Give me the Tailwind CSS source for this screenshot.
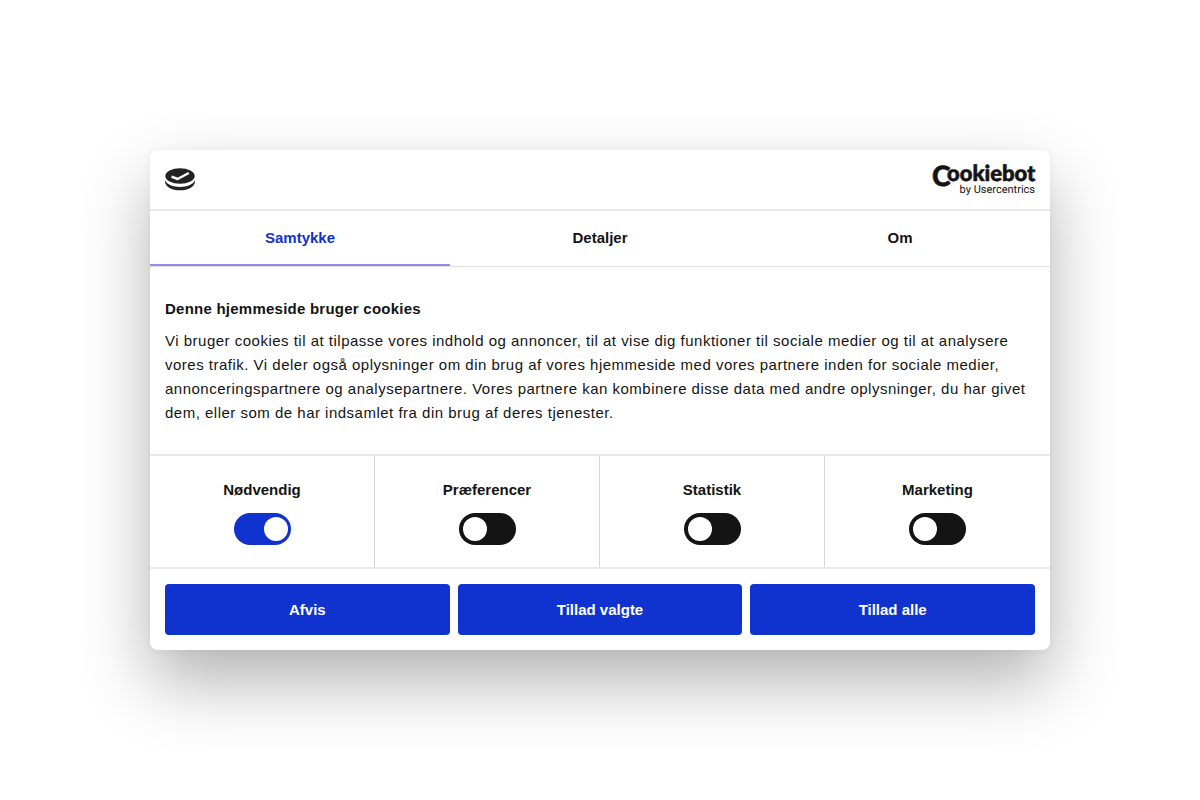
<!DOCTYPE html>
<html lang="da">

<head>
  <meta charset="UTF-8">
  <meta name="viewport" content="width=device-width, initial-scale=1.0">
  <script src="https://cdn.jsdelivr.net/npm/@tailwindcss/browser@4"></script>
  <title>Denne hjemmeside bruger cookies</title>
</head>

<body class="min-h-screen flex items-center justify-center bg-white text-[#141414] text-[15px] leading-6 font-['Liberation_Sans',Arial,sans-serif]">

  <div role="dialog" aria-labelledby="title" class="w-3/4 max-w-[900px] bg-white rounded-lg shadow-[0_32px_68px_rgba(0,0,0,0.3),0_0_8px_rgba(0,0,0,0.04)]">

    <!-- logos -->
    <header class="flex items-center justify-between h-[61px] px-[15px] border-b-2 border-[#e8e8e8]">
      <svg class="w-[30px] h-6" viewBox="0 0 30 24" role="img" aria-label="Logo">
        <ellipse cx="15" cy="8" rx="14.700" ry="7.800" fill="#222" />
        <path d="M0 12.200C2 16.600 8 18.900 15 18.900s13-2.300 15-6.700C30.600 18.500 24 22.300 15 22.300S-.6 18.500 0 12.200z" fill="#222" />
        <path d="M6.500 8.600L12.600 11L23.800 5" fill="none" stroke="#fff" stroke-width="2.500" stroke-linejoin="round" />
      </svg>
      <a href="#">
        <svg class="w-[103px] h-[31px] overflow-visible" viewBox="0 0 103 31" fill="#141414" text-rendering="geometricPrecision">
          <text x="0" y="22" font-family="Lato" font-weight="900" font-size="28" stroke="#141414" stroke-width="0.6">C<tspan x="15" y="17" font-size="22">ookiebot</tspan></text>
          <text x="103" y="29" text-anchor="end" font-family="Roboto" font-size="11">by Usercentrics</text>
        </svg>
      </a>
    </header>

    <nav class="grid grid-cols-3 h-14 border-b border-[#dedede] font-bold">
      <button class="border-b-2 border-[#8f92e2] text-[#1032cf] cursor-pointer">Samtykke</button>
      <button class="border-b-2 border-transparent cursor-pointer">Detaljer</button>
      <button class="border-b-2 border-transparent cursor-pointer">Om</button>
    </nav>

    <main class="px-[15px] pt-[30px] pb-[29px]">
      <h2 id="title" class="font-bold tracking-[0.016em] mb-2">Denne hjemmeside bruger cookies</h2>
      <p class="tracking-[0.033em]">Vi bruger cookies til at tilpasse vores indhold og annoncer, til at vise dig funktioner til sociale medier og til at analysere vores trafik. Vi deler også oplysninger om din brug af vores hjemmeside med vores partnere inden for sociale medier, annonceringspartnere og analysepartnere. Vores partnere kan kombinere disse data med andre oplysninger, du har givet dem, eller som de har indsamlet fra din brug af deres tjenester.</p>
    </main>

    <!-- categories -->
    <div class="grid grid-cols-4 border-y-2 border-[#e8e8e8] font-bold">
      <div class="flex flex-col items-center gap-[11px] py-[22px] border-r border-[#d6d6d6]">
        <label for="necessary">Nødvendig</label>
        <input id="necessary" type="checkbox" checked class="appearance-none w-[57px] h-8 p-1 checked:pr-[3px] rounded-full bg-[#141414] checked:bg-[#1032cf] before:block before:size-6 before:rounded-full before:bg-white checked:before:ml-auto">
      </div>
      <div class="flex flex-col items-center gap-[11px] py-[22px] border-r border-[#d6d6d6]">
        <label for="preferences">Præferencer</label>
        <input id="preferences" type="checkbox" class="appearance-none w-[57px] h-8 p-1 checked:pr-[3px] rounded-full bg-[#141414] checked:bg-[#1032cf] before:block before:size-6 before:rounded-full before:bg-white checked:before:ml-auto">
      </div>
      <div class="flex flex-col items-center gap-[11px] py-[22px] border-r border-[#d6d6d6]">
        <label for="statistics">Statistik</label>
        <input id="statistics" type="checkbox" class="appearance-none w-[57px] h-8 p-1 checked:pr-[3px] rounded-full bg-[#141414] checked:bg-[#1032cf] before:block before:size-6 before:rounded-full before:bg-white checked:before:ml-auto">
      </div>
      <div class="flex flex-col items-center gap-[11px] py-[22px]">
        <label for="marketing">Marketing</label>
        <input id="marketing" type="checkbox" class="appearance-none w-[57px] h-8 p-1 checked:pr-[3px] rounded-full bg-[#141414] checked:bg-[#1032cf] before:block before:size-6 before:rounded-full before:bg-white checked:before:ml-auto">
      </div>
    </div>

    <footer class="flex gap-2 p-[15px] font-bold text-white">
      <button class="flex-1 h-[51px] rounded bg-[#1032cf] cursor-pointer">Afvis</button>
      <button class="flex-1 h-[51px] rounded bg-[#1032cf] cursor-pointer">Tillad valgte</button>
      <button class="flex-1 h-[51px] rounded bg-[#1032cf] cursor-pointer">Tillad alle</button>
    </footer>
  </div>

</body>

</html>
